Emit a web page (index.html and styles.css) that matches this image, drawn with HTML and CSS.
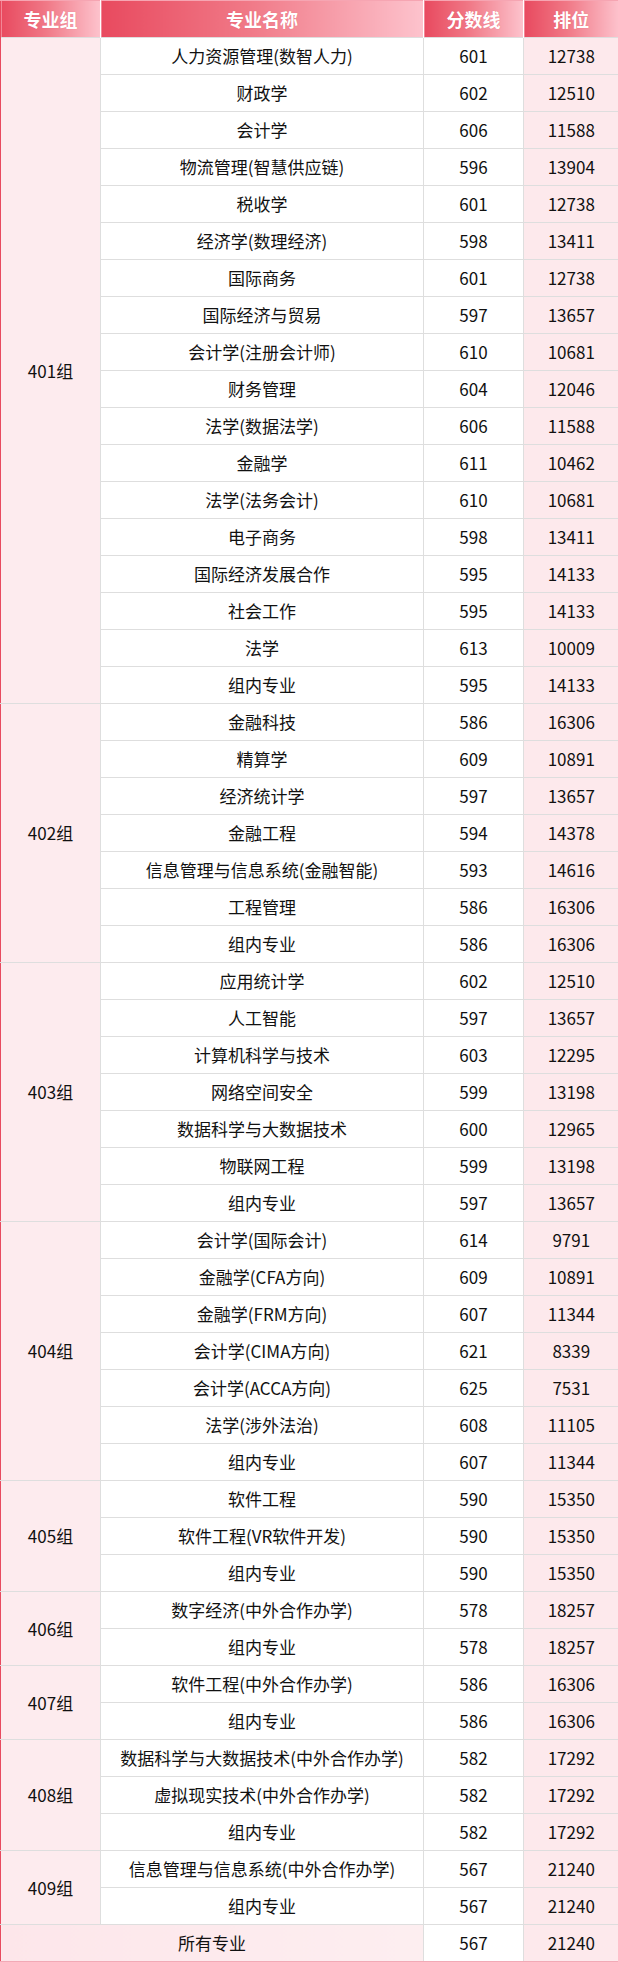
FILE: index.html
```html
<!DOCTYPE html>
<html lang="zh-CN">
<head>
<meta charset="utf-8">
<title>专业组分数线</title>
<link rel="stylesheet" href="styles.css">
</head>
<body>
<table class="score-table">
  <colgroup>
    <col class="c-group">
    <col class="c-name">
    <col class="c-score">
    <col class="c-rank">
  </colgroup>
  <thead>
    <tr><th>专业组</th><th>专业名称</th><th>分数线</th><th>排位</th></tr>
  </thead>
  <tbody>
    <tr><td class="grp" rowspan="18">401组</td><td>人力资源管理(数智人力)</td><td>601</td><td class="rank">12738</td></tr>
    <tr><td>财政学</td><td>602</td><td class="rank">12510</td></tr>
    <tr><td>会计学</td><td>606</td><td class="rank">11588</td></tr>
    <tr><td>物流管理(智慧供应链)</td><td>596</td><td class="rank">13904</td></tr>
    <tr><td>税收学</td><td>601</td><td class="rank">12738</td></tr>
    <tr><td>经济学(数理经济)</td><td>598</td><td class="rank">13411</td></tr>
    <tr><td>国际商务</td><td>601</td><td class="rank">12738</td></tr>
    <tr><td>国际经济与贸易</td><td>597</td><td class="rank">13657</td></tr>
    <tr><td>会计学(注册会计师)</td><td>610</td><td class="rank">10681</td></tr>
    <tr><td>财务管理</td><td>604</td><td class="rank">12046</td></tr>
    <tr><td>法学(数据法学)</td><td>606</td><td class="rank">11588</td></tr>
    <tr><td>金融学</td><td>611</td><td class="rank">10462</td></tr>
    <tr><td>法学(法务会计)</td><td>610</td><td class="rank">10681</td></tr>
    <tr><td>电子商务</td><td>598</td><td class="rank">13411</td></tr>
    <tr><td>国际经济发展合作</td><td>595</td><td class="rank">14133</td></tr>
    <tr><td>社会工作</td><td>595</td><td class="rank">14133</td></tr>
    <tr><td>法学</td><td>613</td><td class="rank">10009</td></tr>
    <tr><td>组内专业</td><td>595</td><td class="rank">14133</td></tr>

    <tr><td class="grp" rowspan="7">402组</td><td>金融科技</td><td>586</td><td class="rank">16306</td></tr>
    <tr><td>精算学</td><td>609</td><td class="rank">10891</td></tr>
    <tr><td>经济统计学</td><td>597</td><td class="rank">13657</td></tr>
    <tr><td>金融工程</td><td>594</td><td class="rank">14378</td></tr>
    <tr><td>信息管理与信息系统(金融智能)</td><td>593</td><td class="rank">14616</td></tr>
    <tr><td>工程管理</td><td>586</td><td class="rank">16306</td></tr>
    <tr><td>组内专业</td><td>586</td><td class="rank">16306</td></tr>

    <tr><td class="grp" rowspan="7">403组</td><td>应用统计学</td><td>602</td><td class="rank">12510</td></tr>
    <tr><td>人工智能</td><td>597</td><td class="rank">13657</td></tr>
    <tr><td>计算机科学与技术</td><td>603</td><td class="rank">12295</td></tr>
    <tr><td>网络空间安全</td><td>599</td><td class="rank">13198</td></tr>
    <tr><td>数据科学与大数据技术</td><td>600</td><td class="rank">12965</td></tr>
    <tr><td>物联网工程</td><td>599</td><td class="rank">13198</td></tr>
    <tr><td>组内专业</td><td>597</td><td class="rank">13657</td></tr>

    <tr><td class="grp" rowspan="7">404组</td><td>会计学(国际会计)</td><td>614</td><td class="rank">9791</td></tr>
    <tr><td>金融学(CFA方向)</td><td>609</td><td class="rank">10891</td></tr>
    <tr><td>金融学(FRM方向)</td><td>607</td><td class="rank">11344</td></tr>
    <tr><td>会计学(CIMA方向)</td><td>621</td><td class="rank">8339</td></tr>
    <tr><td>会计学(ACCA方向)</td><td>625</td><td class="rank">7531</td></tr>
    <tr><td>法学(涉外法治)</td><td>608</td><td class="rank">11105</td></tr>
    <tr><td>组内专业</td><td>607</td><td class="rank">11344</td></tr>

    <tr><td class="grp" rowspan="3">405组</td><td>软件工程</td><td>590</td><td class="rank">15350</td></tr>
    <tr><td>软件工程(VR软件开发)</td><td>590</td><td class="rank">15350</td></tr>
    <tr><td>组内专业</td><td>590</td><td class="rank">15350</td></tr>

    <tr><td class="grp" rowspan="2">406组</td><td>数字经济(中外合作办学)</td><td>578</td><td class="rank">18257</td></tr>
    <tr><td>组内专业</td><td>578</td><td class="rank">18257</td></tr>

    <tr><td class="grp" rowspan="2">407组</td><td>软件工程(中外合作办学)</td><td>586</td><td class="rank">16306</td></tr>
    <tr><td>组内专业</td><td>586</td><td class="rank">16306</td></tr>

    <tr><td class="grp" rowspan="3">408组</td><td>数据科学与大数据技术(中外合作办学)</td><td>582</td><td class="rank">17292</td></tr>
    <tr><td>虚拟现实技术(中外合作办学)</td><td>582</td><td class="rank">17292</td></tr>
    <tr><td>组内专业</td><td>582</td><td class="rank">17292</td></tr>

    <tr><td class="grp" rowspan="2">409组</td><td>信息管理与信息系统(中外合作办学)</td><td>567</td><td class="rank">21240</td></tr>
    <tr><td>组内专业</td><td>567</td><td class="rank">21240</td></tr>

    <tr class="total"><td class="grp" colspan="2">所有专业</td><td>567</td><td class="rank">21240</td></tr>
  </tbody>
</table>
</body>
</html>
```

FILE: styles.css
```css
html, body {
  margin: 0;
  padding: 0;
  background: #ffffff;
}

.score-table {
  width: 618px;
  table-layout: fixed;
  border-collapse: collapse;
  font-family: "Noto Sans CJK SC", "Microsoft YaHei", sans-serif;
  font-size: 17px;
  color: #111111;
}

.c-group { width: 100px; }
.c-name { width: 323px; }
.c-score { width: 100px; }
.c-rank { width: 95px; }

.score-table th {
  height: 36px;
  padding: 0;
  font-size: 18px;
  font-weight: 700;
  color: #ffffff;
  text-align: center;
  background: linear-gradient(to right, #e84a5f 0%, #f07886 45%, #fdc3cd 100%);
  border-left: 1px solid #ffffff;
  border-right: 1px solid #ffffff;
  border-top: 1px solid #f6a5b2;
  text-shadow: 0 0 1px rgba(200, 40, 60, 0.35);
}

.score-table th:first-child {
  border-left: 1px solid #e84a5f;
}

.score-table th:last-child {
  border-right: 0;
}

.score-table td {
  height: 36px;
  padding: 0 2px;
  text-align: center;
  vertical-align: middle;
  border: 1px solid #dedede;
  white-space: nowrap;
  line-height: 20px;
}

.score-table td.grp {
  background: #fdebee;
  border-left: 1px solid #e84a5f;
}

.score-table td.rank {
  background: #fde9ec;
  border-right: 0;
}

.score-table tr.total td {
  border-bottom: 1px solid #f3a9b6;
}

.score-table tr.total td.grp {
  background: linear-gradient(to right, #fde6ea, #fdeef0);
}
```
